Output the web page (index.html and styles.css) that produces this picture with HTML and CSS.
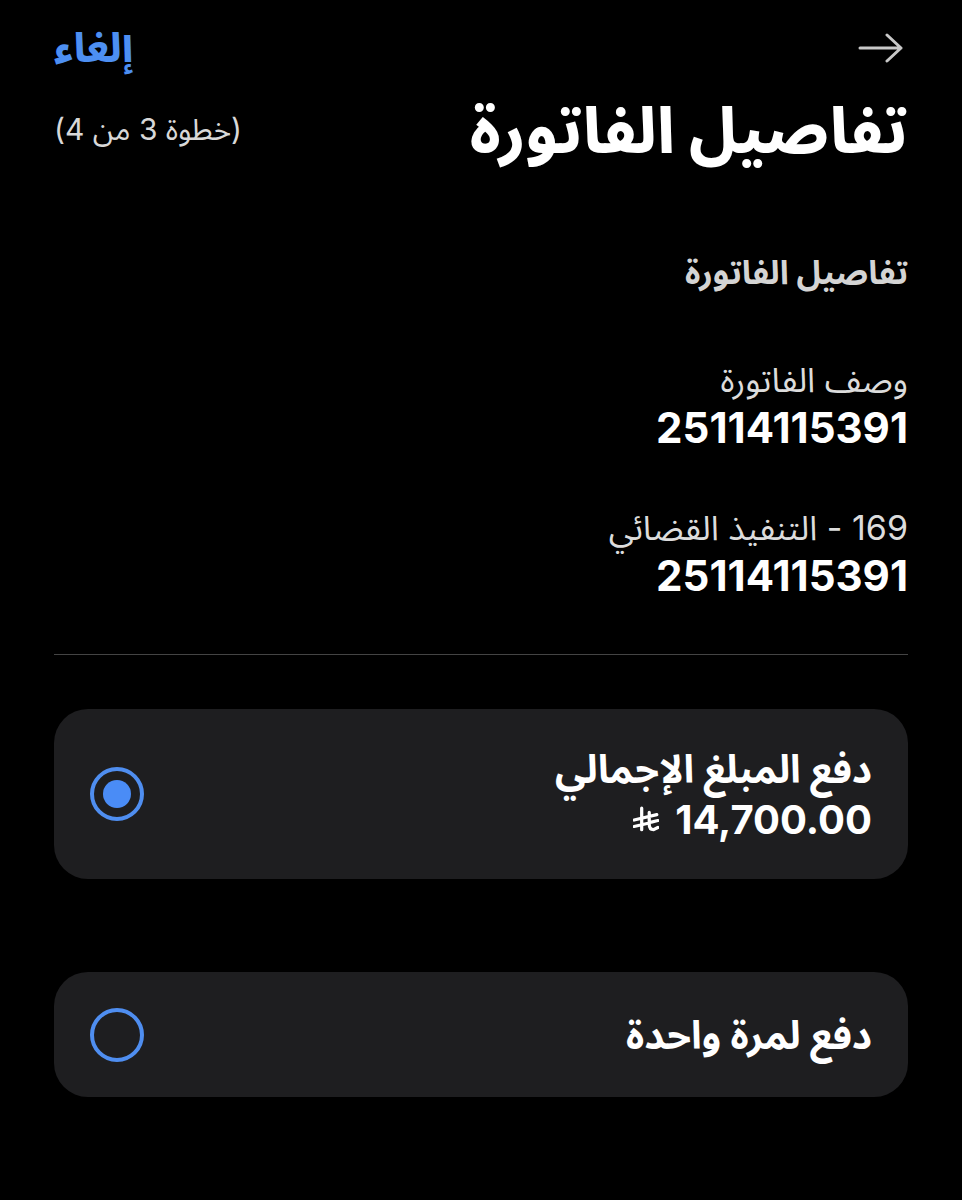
FILE: index.html
```html
<!DOCTYPE html>
<html lang="ar" dir="rtl">
<head>
    <meta charset="UTF-8">
    <meta name="viewport" content="width=device-width, initial-scale=1.0">
    <title>تفاصيل الفاتورة</title>
    <link rel="stylesheet" href="styles.css">
</head>
<body>
    <div class="page">
        <div class="top-bar">
            <svg class="back-arrow" width="46" height="30" viewBox="0 0 46 30">
                <path d="M2 15 H43 M29 2 L43 15 L29 28" fill="none" stroke="#c8c8c8" stroke-width="3" stroke-linecap="round" stroke-linejoin="round"/>
            </svg>
            <a class="cancel" href="#">إلغاء</a>
        </div>

        <div class="title-row">
            <h1>تفاصيل الفاتورة</h1>
            <span class="step">(خطوة 3 من 4)</span>
        </div>

        <h2 class="section-title">تفاصيل الفاتورة</h2>

        <div class="field">
            <div class="field-label">وصف الفاتورة</div>
            <div class="field-value">25114115391</div>
        </div>

        <div class="field">
            <div class="field-label">169 - التنفيذ القضائي</div>
            <div class="field-value">25114115391</div>
        </div>

        <hr class="divider">

        <!-- Payment options -->
        <div class="option option-tall">
            <div class="option-text">
                <div class="option-title">دفع المبلغ الإجمالي</div>
                <div class="amount">
                    <span>14,700.00</span>
                    <svg class="riyal" width="26" height="28" viewBox="0 0 24 26">
                        <path d="M8 2 V22 M15 6 V17 Q15 22 19 22 L23 20 M1 13 L22 8 M1 19 L14 16 M17 15 L23 13.5" fill="none" stroke="#fff" stroke-width="3" stroke-linecap="round"/>
                    </svg>
                </div>
            </div>
            <span class="radio checked"></span>
        </div>

        <div class="option">
            <div class="option-text">
                <div class="option-title">دفع لمرة واحدة</div>
            </div>
            <span class="radio"></span>
        </div>
    </div>
</body>
</html>
```

FILE: styles.css
```css
body {
    margin: 0;
    padding: 0;
    background-color: #000;
    color: #fff;
    font-family: Inter, "Noto Sans Arabic", "DejaVu Sans", sans-serif;
}

.page {
    padding: 0 54px;
}

.top-bar {
    display: flex;
    justify-content: space-between;
    align-items: center;
    height: 48px;
    padding-top: 24px;
}

.back-arrow {
    margin-right: 4px;
}

.cancel {
    color: #4d8ff2;
    font-size: 40px;
    font-weight: 800;
    line-height: 48px;
    text-decoration: none;
}

.title-row {
    display: flex;
    justify-content: space-between;
    align-items: center;
    margin-top: 10px;
    height: 96px;
}

h1 {
    margin: 0;
    font-size: 63px;
    font-weight: 800;
    line-height: 96px;
    color: #fff;
}

.step {
    font-size: 30px;
    color: #d8d8d8;
}

.section-title {
    margin: 72px 0 0;
    font-size: 33px;
    font-weight: bold;
    line-height: 44px;
    color: #d4d4d4;
}

.field {
    margin-top: 64px;
}

.field + .field {
    margin-top: 52px;
}

.field-label {
    font-size: 34px;
    color: #dcdcdc;
    line-height: 44px;
}

.field-value {
    font-size: 42px;
    font-weight: bold;
    line-height: 52px;
}

.divider {
    border: none;
    border-top: 1px solid #444;
    margin: 52px 0 54px;
}

.option {
    display: flex;
    justify-content: space-between;
    align-items: center;
    background-color: #1e1e20;
    border-radius: 34px;
    height: 125px;
    padding: 0 36px;
    margin-bottom: 93px;
}

.option-tall {
    height: 170px;
}

.option-title {
    font-size: 39px;
    font-weight: bold;
    line-height: 52px;
}

.amount {
    display: flex;
    align-items: center;
    gap: 16px;
    font-size: 40px;
    font-weight: bold;
    line-height: 50px;
}

.radio {
    width: 46px;
    height: 46px;
    border: 4px solid #4f8ef0;
    border-radius: 50%;
    box-sizing: content-box;
    position: relative;
}

.radio.checked::after {
    content: "";
    position: absolute;
    top: 9px;
    left: 9px;
    width: 28px;
    height: 28px;
    border-radius: 50%;
    background-color: #4a8cf6;
}
```
